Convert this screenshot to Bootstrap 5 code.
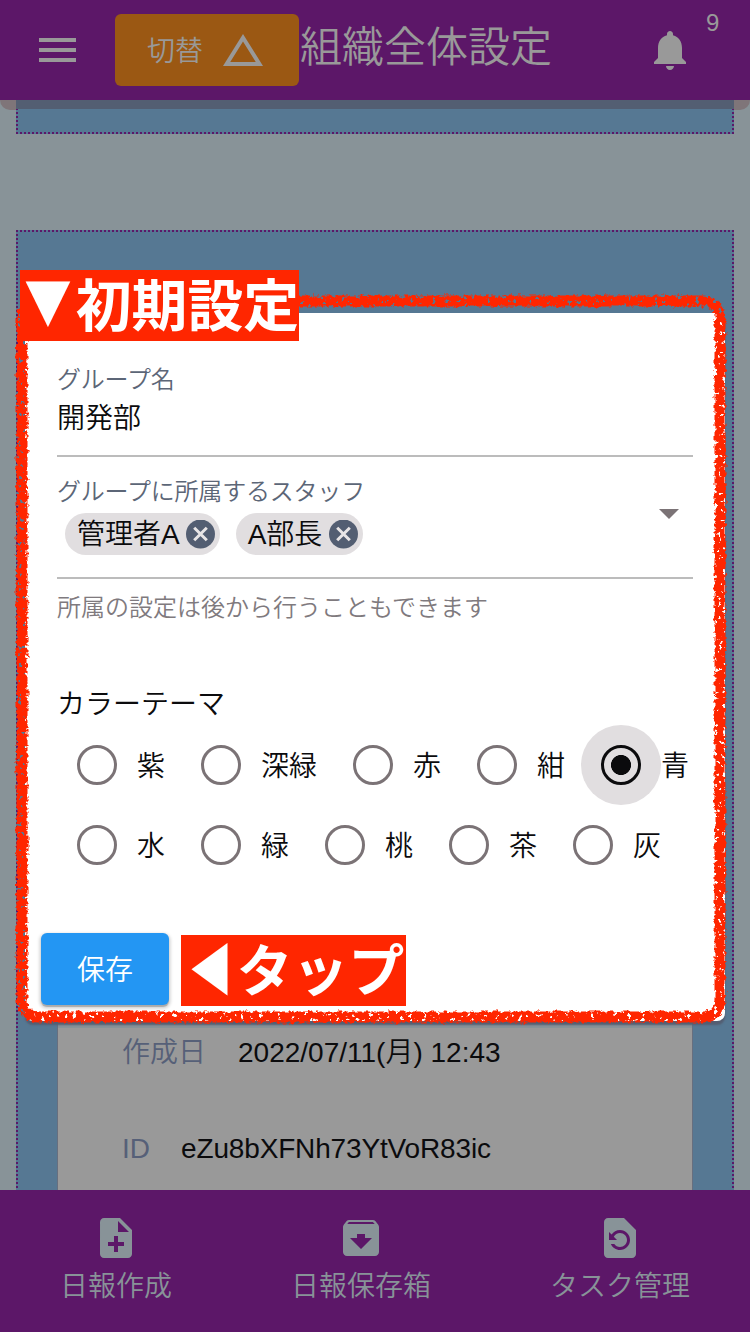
<!DOCTYPE html>
<html lang="ja">
<head>
<meta charset="utf-8">
<meta name="viewport" content="width=device-width, initial-scale=1">
<title>組織全体設定</title>
<link rel="stylesheet" href="https://cdn.jsdelivr.net/npm/bootstrap@5.3.0/dist/css/bootstrap.min.css">
<style>
:root{--purple:#5c1768;--blue:#567893;--page:#889398;--ink:#0b0b0d;--red:#ff2600}
body{width:750px;height:1332px;overflow:hidden;background:var(--page);font-family:"Liberation Sans","Noto Sans CJK JP DemiLight","Noto Sans CJK JP",sans-serif;font-size:28px;font-weight:350;line-height:40px;color:var(--ink)}
svg{display:block;flex:none}
.app-bar{height:100px;background:var(--purple);color:#999;padding-left:33px}
.switch-btn,.switch-btn:hover{background:#9b5813;color:#999;border:0;border-radius:6px;height:72px;padding:0 32px;font-size:28px;font-weight:350;margin-left:34px}
.btn-text{padding-top:3px}
.app-title{font-size:42px;line-height:60px;width:347px;padding-left:1px;margin-top:-5px}
.bell-count{font-size:24px;line-height:24px;left:706px;top:11px}
.dotted-panel{margin:0 16px;--h:repeating-linear-gradient(90deg,var(--purple) 0 2px,transparent 2px 4px);--v:repeating-linear-gradient(var(--purple) 0 2px,transparent 2px 4px);
 background:var(--h) 0 0/100% 2px no-repeat,var(--h) 0 100%/100% 2px no-repeat,var(--v) 0 0/2px 100% no-repeat,var(--v) 100% 0/2px 100% no-repeat,var(--blue)}
.panel-end{height:34px;background:linear-gradient(#535e72,#535e72) 0 0/100% 9px no-repeat,var(--h) 0 100%/100% 2px no-repeat,var(--v) 0 0/2px 100% no-repeat,var(--v) 100% 0/2px 100% no-repeat,var(--blue)}
.bar-shade{left:0;right:0;top:100px;height:10px;background:#7f7579;border-radius:0 0 16px 16px}
.panel-main{margin-top:96px;padding:120px 41px 0;height:1000px}
.group-info{background:linear-gradient(var(--page),var(--page)) 0 670px/100% 8px no-repeat,#999;border:1px solid #676f7f;border-width:0 1px;height:100%;padding:683px 64px 0;box-sizing:border-box}
.group-info dt{font-weight:350;color:#566078;margin-right:32px}
.group-info dd{margin:0}
.group-id{letter-spacing:-.15px;margin-left:-1px!important}
.info-row{margin-bottom:56px}
.tab-bar{height:142px;background:var(--purple);color:var(--page);padding:24px 60px 0}
.tab-item{gap:5px}
.dialog-box{left:25px;top:313px;width:700px;height:708px;background:#fff;border-radius:8px;padding:49px 32px 16px;box-shadow:0 4px 2px #535e72}
.field-label{font-size:24px;line-height:36px;color:#5c6677;letter-spacing:-.2px}
.field-value{padding:1px 0 16px;border-bottom:2px solid #bcbcbc}
.label-staff{margin-top:17px}
.field-chips{padding:3px 8px 22px;gap:16px;border-bottom:2px solid #bcbcbc}
.staff-chip{height:42px;border-radius:21px;background:#e1dee0;padding:0 5px 0 12px;gap:6px}
.staff-chip span{padding-top:1px}
.drop-arrow{right:46px;top:196px}
.help-text{font-size:24px;line-height:36px;color:#7f7a7e;margin-top:11px}
.theme-title{margin-top:59px}
.theme-list{margin-right:-16px}
.theme-opt{margin-right:16px}
.opt-name{padding-top:3px}
.radio-area{width:80px;height:80px;border-radius:50%}
.radio-area:has(:checked){background:#e1dee0}
.radio-area input{appearance:none;width:40px;height:40px;border:3.5px solid #7b7376;border-radius:50%;margin:0}
.radio-area input:checked{border-color:var(--ink);background:radial-gradient(circle,var(--ink) 9.7px,transparent 10.3px)}
.save-btn,.save-btn:hover{background:#2396f3;color:#fff;border:0;border-radius:6px;width:128px;height:72px;font-size:28px;font-weight:350;margin:48px 0 0 -16px;padding:3px 0 0;box-shadow:0 2px 1px #aaa,0 2px 3px 2px #ddd}
.note-tag{background:var(--red);color:#fff;font-weight:700;font-size:55.8px;line-height:63px;height:71px;white-space:nowrap;font-family:"Noto Sans CJK JP",sans-serif}
.note-start{left:20px;top:270px;width:279px}
.note-tap{left:181px;top:935px;width:225px}
.note-mark{display:inline-block;transform:translateY(-3px) scaleX(.85)}
.note-tap .note-mark{transform:translate(2px,-1px) scaleX(.79)}
.crayon{left:0;top:0;pointer-events:none}
</style>
</head>
<body class="position-relative d-flex flex-column">
<header class="app-bar d-flex align-items-center flex-shrink-0 position-relative">
  <svg width="48" height="48" viewBox="0 0 24 24" fill="#999"><path d="M3 6h18.5v2H3zM3 11h18.5v2H3zM3 16h18.5v2H3z"/></svg>
  <button class="btn switch-btn d-flex align-items-center gap-3 text-nowrap"><span class="btn-text">切替</span>
    <svg width="48" height="48" viewBox="0 0 24 24" fill="#999"><path d="M12 7.77L18.39 18H5.61L12 7.77M12 4L2 20h20L12 4z"/></svg>
  </button>
  <div class="app-title text-nowrap">組織全体設定</div>
  <svg width="48" height="48" viewBox="0 0 24 24" fill="#999"><path d="M12 22c1.1 0 2-.9 2-2h-4c0 1.1.89 2 2 2zm6-6v-5c0-3.07-1.64-5.64-4.5-6.32V4c0-.83-.67-1.5-1.5-1.5s-1.5.67-1.5 1.5v.68C7.63 5.36 6 7.92 6 11v5l-2 2v1h16v-1l-2-2z"/></svg>
  <span class="bell-count position-absolute">9</span>
</header>
<div class="bar-shade position-absolute"></div>
<main class="flex-grow-1 overflow-hidden position-relative" style="min-height:0">
  <section class="dotted-panel panel-end"></section>
  <section class="dotted-panel panel-main">
    <dl class="group-info mb-0">
      <div class="info-row d-flex"><dt>作成日</dt><dd>2022/07/11(月) 12:43</dd></div>
      <div class="info-row d-flex"><dt>ID</dt><dd class="group-id">eZu8bXFNh73YtVoR83ic</dd></div>
    </dl>
  </section>
</main>
<nav class="tab-bar d-flex justify-content-between flex-shrink-0 text-nowrap">
  <div class="tab-item d-flex flex-column align-items-center">
    <svg width="48" height="48" viewBox="0 0 24 24" fill="currentColor"><path d="M14 2H6c-1.1 0-1.99.9-1.99 2L4 20c0 1.1.89 2 1.99 2H18c1.1 0 2-.9 2-2V8l-6-6zm2 14h-3v3h-2v-3H8v-2h3v-3h2v3h3v2zm-3-7V3.5L18.5 9H13z"/></svg>
    日報作成
  </div>
  <div class="tab-item d-flex flex-column align-items-center">
    <svg width="48" height="48" viewBox="0 0 24 24" fill="currentColor"><path d="M20.54 5.23l-1.39-1.68C18.88 3.21 18.47 3 18 3H6c-.47 0-.88.21-1.16.55L3.46 5.23C3.17 5.57 3 6.02 3 6.5V19c0 1.1.9 2 2 2h14c1.1 0 2-.9 2-2V6.5c0-.48-.17-.93-.46-1.27zM12 17.5L6.5 12H10v-2h4v2h3.5L12 17.5zM5.12 5l.81-1h12l.94 1H5.12z"/></svg>
    日報保存箱
  </div>
  <div class="tab-item d-flex flex-column align-items-center">
    <svg width="48" height="48" viewBox="0 0 24 24" fill="currentColor"><path d="M14 2H6c-1.1 0-1.99.9-1.99 2L4 20c0 1.1.89 2 1.99 2H18c1.1 0 2-.9 2-2V8l-6-6zm-2 16c-2.05 0-3.81-1.24-4.58-3h1.71c.63.9 1.68 1.5 2.87 1.5 1.93 0 3.5-1.57 3.5-3.5S13.93 9.5 12 9.5c-1.35 0-2.52.78-3.1 1.9l1.6 1.6h-4V9l1.3 1.3C8.69 8.92 10.23 8 12 8c2.76 0 5 2.24 5 5s-2.24 5-5 5z"/></svg>
    タスク管理
  </div>
</nav>

<div class="dialog-box position-absolute" role="dialog">
  <div class="field-label">グループ名</div>
  <div class="field-value">開発部</div>
  <div class="field-label label-staff">グループに所属するスタッフ</div>
  <div class="field-chips d-flex">
    <span class="staff-chip d-flex align-items-center"><span>管理者A</span>
      <svg width="29" height="29" viewBox="0 0 29 29"><circle cx="14.5" cy="14" r="14.5" fill="#535e72"/><path d="M8.2 7.7L20.8 20.3M20.8 7.7L8.2 20.3" stroke="#e8e5e6" stroke-width="3"/></svg>
    </span>
    <span class="staff-chip d-flex align-items-center"><span class="me-1">A部長</span>
      <svg class="ms-n1" width="29" height="29" viewBox="0 0 29 29" style="margin-left:-3px"><circle cx="14.5" cy="14" r="14.5" fill="#535e72"/><path d="M8.2 7.7L20.8 20.3M20.8 7.7L8.2 20.3" stroke="#e8e5e6" stroke-width="3"/></svg>
    </span>
  </div>
  <svg class="drop-arrow position-absolute" width="20" height="10" viewBox="0 0 20 10"><path d="M0 0h20L10 10z" fill="#7b7376"/></svg>
  <div class="help-text">所属の設定は後から行うこともできます</div>
  <div class="theme-title">カラーテーマ</div>
  <div class="theme-list d-flex flex-wrap text-nowrap">
    <label class="theme-opt d-flex align-items-center"><span class="radio-area d-flex align-items-center justify-content-center"><input type="radio" name="theme"></span><span class="opt-name">紫</span></label>
    <label class="theme-opt d-flex align-items-center"><span class="radio-area d-flex align-items-center justify-content-center"><input type="radio" name="theme"></span><span class="opt-name">深緑</span></label>
    <label class="theme-opt d-flex align-items-center"><span class="radio-area d-flex align-items-center justify-content-center"><input type="radio" name="theme"></span><span class="opt-name">赤</span></label>
    <label class="theme-opt d-flex align-items-center"><span class="radio-area d-flex align-items-center justify-content-center"><input type="radio" name="theme"></span><span class="opt-name">紺</span></label>
    <label class="theme-opt me-0 d-flex align-items-center"><span class="radio-area d-flex align-items-center justify-content-center"><input type="radio" name="theme" checked></span><span class="opt-name">青</span></label>
    <label class="theme-opt d-flex align-items-center"><span class="radio-area d-flex align-items-center justify-content-center"><input type="radio" name="theme"></span><span class="opt-name">水</span></label>
    <label class="theme-opt d-flex align-items-center"><span class="radio-area d-flex align-items-center justify-content-center"><input type="radio" name="theme"></span><span class="opt-name">緑</span></label>
    <label class="theme-opt d-flex align-items-center"><span class="radio-area d-flex align-items-center justify-content-center"><input type="radio" name="theme"></span><span class="opt-name">桃</span></label>
    <label class="theme-opt d-flex align-items-center"><span class="radio-area d-flex align-items-center justify-content-center"><input type="radio" name="theme"></span><span class="opt-name">茶</span></label>
    <label class="theme-opt d-flex align-items-center"><span class="radio-area d-flex align-items-center justify-content-center"><input type="radio" name="theme"></span><span class="opt-name">灰</span></label>
  </div>
  <button class="btn save-btn">保存</button>
</div>

<!-- hand-drawn crayon outline round the dialog -->
<svg class="crayon position-absolute" width="750" height="1332" viewBox="0 0 750 1332">
  <defs>
    <filter id="crayon" filterUnits="userSpaceOnUse" x="0" y="280" width="750" height="760" color-interpolation-filters="sRGB">
      <feTurbulence type="fractalNoise" baseFrequency="0.22" numOctaves="3" seed="4" result="n"/>
      <feDisplacementMap in="SourceGraphic" in2="n" scale="6" xChannelSelector="R" yChannelSelector="G" result="d"/>
      <feColorMatrix in="n" type="matrix" values="0 0 0 0 0  0 0 0 0 0  0 0 0 0 0  0 0 14 0 -3.9" result="m"/>
      <feComposite in="d" in2="m" operator="in"/>
    </filter>
  </defs>
  <rect x="22" y="301" width="698" height="716" rx="17" fill="none" stroke="#ff2600" stroke-width="11" filter="url(#crayon)"/>
</svg>
<div class="note-tag note-start position-absolute"><span class="note-mark">▼</span>初期設定</div>
<div class="note-tag note-tap position-absolute"><span class="note-mark">◀</span>タップ</div>
<script src="https://cdn.jsdelivr.net/npm/bootstrap@5.3.0/dist/js/bootstrap.bundle.min.js"></script>
</body>
</html>
